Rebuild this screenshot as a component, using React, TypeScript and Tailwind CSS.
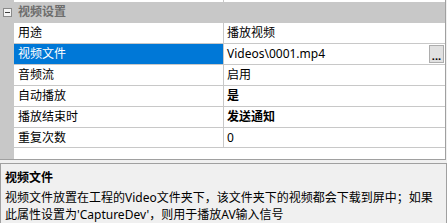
import React from "react";

type Row = { label: string; value: string; bold?: boolean; selected?: boolean; button?: boolean };

const rows: Row[] = [
  { label: "用途", value: "播放视频" },
  { label: "视频文件", value: "Videos\\0001.mp4", selected: true, button: true },
  { label: "音频流", value: "启用" },
  { label: "自动播放", value: "是", bold: true },
  { label: "播放结束时", value: "发送通知", bold: true },
  { label: "重复次数", value: "0" },
];

const font = { fontFamily: '"Noto Sans", "Noto Sans CJK SC", sans-serif' };

export default function App() {
  return (
    <div className="w-[447px] h-[223px] overflow-hidden bg-[#f0f0f0] text-[12px] text-black" style={font}>
      {/* property grid */}
      <div className="h-[160px] w-[446px] flex bg-white border-r border-b border-[#a0a0a0]">
        <div className="w-[14px] shrink-0 bg-[#c8c8c8]" />
        <div className="flex-1 flex flex-col">
          <div className="h-[2px] flex">
            <div className="w-[210px] border-r border-[#c8c8c8]" />
          </div>
          {/* category */}
          <div className="h-[20px] -ml-[14px] flex items-center bg-[#c8c8c8] relative">
            <div className="absolute left-[3px] top-[6px] w-[9px] h-[9px] border border-[#8a8a8a] bg-[#f4f4f4] flex items-center justify-center">
              <div className="w-[5px] h-px bg-[#404040]" />
            </div>
            <span className="ml-[18px] font-bold text-[#6d6d6d] leading-none">视频设置</span>
          </div>
          {rows.map((r) => (
            <div key={r.label} className="h-[21px] flex border-t border-[#c8c8c8] last:border-b">
              <div
                className={
                  "w-[210px] shrink-0 flex items-center pl-[4px] border-r border-[#c8c8c8] " +
                  (r.selected ? "bg-[#0078d7] text-white" : "")
                }
              >
                {r.label}
              </div>
              <div className="flex-1 flex items-center pl-[3px] pr-[1px]">
                <span className={"flex-1 " + (r.bold ? "font-bold" : "")}>{r.value}</span>
                {r.button && (
                  <div className="w-[15px] h-[18px] bg-[#e1e1e1] border border-[#adadad] flex items-end justify-center pb-[1px] font-bold leading-none text-[11px]">
                    ...
                  </div>
                )}
              </div>
            </div>
          ))}
        </div>
      </div>
      {/* description */}
      <div className="mt-[3px] h-[62px] w-[447px] border border-[#a0a0a0] bg-[#f0f0f0] px-[4px] pt-[5px] leading-[17px]">
        <div className="font-bold mb-[3px]">视频文件</div>
        <div className="whitespace-nowrap">视频文件放置在工程的Video文件夹下，该文件夹下的视频都会下载到屏中；如果</div>
        <div className="whitespace-nowrap">此属性设置为'CaptureDev'，则用于播放AV输入信号</div>
      </div>
    </div>
  );
}
